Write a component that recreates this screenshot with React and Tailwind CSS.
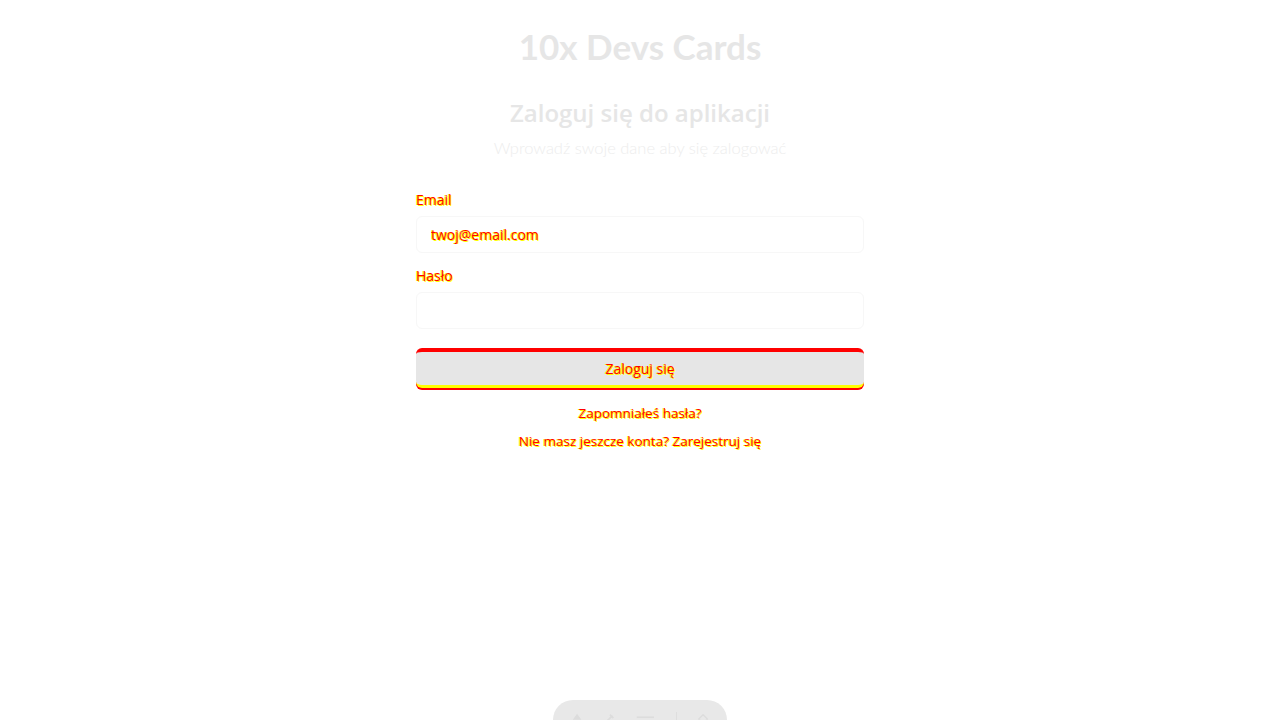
import React from "react";

const glitch = { textShadow: "1px 1px 0 #ffff00, -1px 0 0 #ffff00" };

const Field = ({ label, type, value }) => (
  <div className="flex flex-col gap-[6px]">
    <label className="text-sm font-medium leading-5 text-[#ff0000]" style={glitch}>
      {label}
    </label>
    <input
      type={type}
      defaultValue={value}
      className="h-[37px] w-full rounded-md border border-[#f7f7f7] bg-white px-[14px] text-sm text-[#ff0000] outline-none"
      style={glitch}
    />
  </div>
);

const App = () => {
  return (
    <div className="relative flex min-h-[720px] flex-col items-center bg-white font-['Open_Sans',sans-serif]">
      <h1 className="mt-[22px] font-['Lato',sans-serif] text-[35px] font-bold leading-[48px] text-[#e6e6e6]">
        10x Devs Cards
      </h1>
      <div className="mt-[27px] flex flex-col items-center">
        <h2 className="text-[24px] font-semibold leading-8 text-[#e6e6e6]">Zaloguj się do aplikacji</h2>
        <p className="mt-[7px] font-['Lato',sans-serif] text-[16.5px] font-light leading-6 text-[#ededed]">
          Wprowadź swoje dane aby się zalogować
        </p>
      </div>
      <form className="mt-[30px] flex w-[448px] flex-col gap-[13px]" onSubmit={(e) => e.preventDefault()}>
        <Field label="Email" type="email" value="twoj@email.com" />
        <Field label="Hasło" type="password" value="" />
        <button
          type="submit"
          className="mt-[6px] h-[40px] w-full rounded-md border-t-[4px] border-b-[3px] border-t-[#ff0000] border-b-[#ffff00] bg-[#e6e6e6] text-sm font-medium text-[#ff0000]"
          style={{ ...glitch, boxShadow: "0 2px 0 #ff0000" }}>
          Zaloguj się
        </button>
      </form>
      <div className="mt-[14px] flex flex-col items-center gap-[6px] text-[13.5px]">
        <a href="#" className="leading-[22px] text-[#ff0000]" style={glitch}>
          Zapomniałeś hasła?
        </a>
        <a href="#" className="leading-[22px] text-[#ff0000]" style={glitch}>
          Nie masz jeszcze konta? Zarejestruj się
        </a>
      </div>
      <div className="absolute bottom-[-20px] left-1/2 flex h-[40px] w-[174px] -translate-x-1/2 items-start gap-[20px] rounded-full bg-[#e8e8e8] px-[18px] pt-[12px]">
        <svg width="14" height="14" viewBox="0 0 14 14" className="text-[#dcdcdc]">
          <path d="M7 1 L12 8 H2 Z" fill="currentColor" />
        </svg>
        <svg width="14" height="14" viewBox="0 0 14 14" className="text-[#dcdcdc]">
          <path d="M3 11 L11 3 M8 2 L12 6" stroke="currentColor" strokeWidth="2" fill="none" />
        </svg>
        <svg width="24" height="14" viewBox="0 0 24 14" className="text-[#dcdcdc]">
          <path d="M2 5 H22" stroke="currentColor" strokeWidth="2" />
        </svg>
        <div className="h-[28px] w-px bg-[#dedede]" />
        <svg width="14" height="14" viewBox="0 0 14 14" className="text-[#dcdcdc]">
          <path d="M7 2 L12 7 L7 12 L2 7 Z" stroke="currentColor" strokeWidth="1.5" fill="none" />
        </svg>
      </div>
    </div>
  );
};

export default App;
